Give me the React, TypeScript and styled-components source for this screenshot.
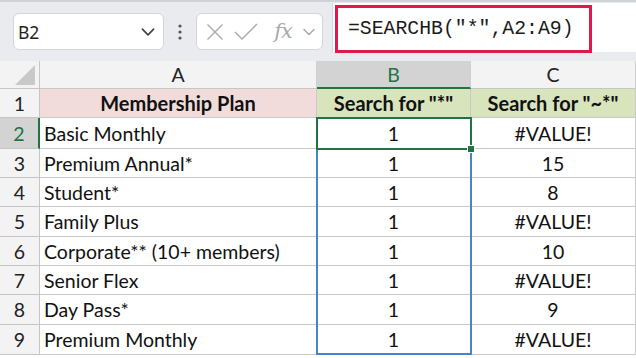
import React from "react";
import styled, { createGlobalStyle } from "styled-components";

const Global = createGlobalStyle`
  html, body { margin: 0; padding: 0; background: #ffffff; }
  body { width: 636px; height: 358px; overflow: hidden; }
  * { box-sizing: border-box; }
`;

const Page = styled.div`
  width: 636px;
  height: 358px;
  overflow: hidden;
  display: flex;
  flex-direction: column;
  font-family: Lato, "Open Sans", sans-serif;
`;

const Toolbar = styled.div`
  height: 61px;
  flex: 0 0 61px;
  background: #e9ebee;
  border-top: 2px solid #cfd2d6;
  display: flex;
  align-items: flex-start;
  padding-left: 13px;
`;

const NameBox = styled.div`
  margin-top: 11px;
  width: 151px;
  height: 37px;
  background: #fff;
  border: 1px solid #d3d5d9;
  border-radius: 6px;
  display: flex;
  align-items: center;
  justify-content: space-between;
  padding: 0 6px 0 4px;
  font-family: "Noto Sans", "Open Sans", sans-serif;
  font-size: 17.5px;
  color: #1f1f1f;
`;

const Dots = styled.div`
  width: 32px;
  height: 37px;
  margin-top: 11px;
  display: flex;
  align-items: center;
  justify-content: center;
`;

const FxButtons = styled.div`
  margin-top: 11px;
  width: 127px;
  height: 37px;
  background: #fff;
  border: 1px solid #d3d5d9;
  border-radius: 6px;
  display: flex;
  align-items: center;
  padding-left: 6px;
`;

const IconSlot = styled.div<{ $w: number }>`
  width: ${(p) => p.$w}px;
  height: 100%;
  display: flex;
  align-items: center;
  justify-content: center;
`;

const Fx = styled.span`
  font-family: "DejaVu Serif", "Liberation Serif", serif;
  font-style: italic;
  font-size: 21px;
  color: #a9a9a9;
  letter-spacing: -1px;
  margin-top: -2px;
`;

const FormulaBar = styled.div`
  margin-left: 9px;
  margin-top: 1px;
  flex: 1;
  height: 49px;
  background: #fff;
  border-left: 1px solid #d6d8db;
  display: flex;
  align-items: flex-start;
  padding-left: 2px;
`;

const Highlight = styled.div`
  margin-top: 2px;
  width: 257px;
  height: 48px;
  border: 3px solid #e0194a;
  display: flex;
  align-items: center;
  padding-left: 10px;
  font-family: "Liberation Mono", "DejaVu Sans Mono", monospace;
  font-size: 19.8px;
  color: #1a1a1a;
  white-space: nowrap;
`;

const Sheet = styled.div`
  position: relative;
  display: grid;
  grid-template-columns: 40px 277px 154px 165px;
  grid-template-rows: 28px 29px 31px 29px 29px 30px 29px 29px 30px 30px;
`;

const ColHead = styled.div<{ $sel?: boolean }>`
  background: ${(p) => (p.$sel ? "#d3d3d3" : "#f3f3f3")};
  border-right: 1px solid #d0d0d0;
  border-bottom: ${(p) => (p.$sel ? "2px solid #217346" : "1px solid #c6c6c6")};
  display: flex;
  align-items: center;
  justify-content: center;
  font-size: 19.5px;
  color: ${(p) => (p.$sel ? "#217346" : "#222")};
  padding-top: ${(p) => (p.$sel ? "1px" : "0")};
`;

const Corner = styled.div`
  background: #f3f3f3;
  border-right: 1px solid #c6c6c6;
  border-bottom: 1px solid #c6c6c6;
  display: flex;
  align-items: flex-end;
  justify-content: flex-end;
  padding: 0 4px 3px 0;
`;

const RowHead = styled.div<{ $sel?: boolean }>`
  background: ${(p) => (p.$sel ? "#d3d3d3" : "#f3f3f3")};
  border-right: ${(p) => (p.$sel ? "2px solid #217346" : "1px solid #c6c6c6")};
  border-bottom: 1px solid #c6c6c6;
  display: flex;
  align-items: center;
  justify-content: center;
  font-size: 19.5px;
  color: ${(p) => (p.$sel ? "#217346" : "#222")};
`;

const Cell = styled.div<{ $align?: "left" | "center"; $bg?: string; $bold?: boolean }>`
  background: ${(p) => p.$bg || "#fff"};
  border-right: 1px solid #c9c9c9;
  border-bottom: 1px solid #c9c9c9;
  display: flex;
  align-items: center;
  justify-content: ${(p) => (p.$align === "center" ? "center" : "flex-start")};
  padding-left: ${(p) => (p.$align === "center" ? "0" : "4px")};
  font-size: ${(p) => (p.$bold ? "20px" : "19.5px")};
  font-weight: ${(p) => (p.$bold ? 700 : 400)};
  color: #111;
  white-space: nowrap;
  overflow: hidden;
`;

const RangeBox = styled.div`
  position: absolute;
  left: 316px;
  top: 56px;
  width: 156px;
  height: 238px;
  border: 2px solid #4a82cf;
  pointer-events: none;
`;

const ActiveBox = styled.div`
  position: absolute;
  left: 316px;
  top: 56px;
  width: 156px;
  height: 33px;
  border: 2px solid #217346;
  pointer-events: none;
`;

const FillHandle = styled.div`
  position: absolute;
  right: -5px;
  bottom: -5px;
  width: 8px;
  height: 8px;
  background: #217346;
  border: 1px solid #fff;
`;

const Chevron = ({ color, size }: { color: string; size: number }) => (
  <svg width={size} height={size} viewBox="0 0 16 16" fill="none">
    <path d="M3 5.5 L8 10.5 L13 5.5" stroke={color} strokeWidth="1.5" strokeLinecap="round" strokeLinejoin="round" />
  </svg>
);

const data: [string, string, string][] = [
  ["Basic Monthly", "1", "#VALUE!"],
  ["Premium Annual*", "1", "15"],
  ["Student*", "1", "8"],
  ["Family Plus", "1", "#VALUE!"],
  ["Corporate** (10+ members)", "1", "10"],
  ["Senior Flex", "1", "#VALUE!"],
  ["Day Pass*", "1", "9"],
  ["Premium Monthly", "1", "#VALUE!"],
];

export default function App() {
  return (
    <Page>
      <Global />
      <Toolbar>
        <NameBox>
          <span>B2</span>
          <Chevron color="#444" size={18} />
        </NameBox>
        <Dots>
          <svg width="4" height="16" viewBox="0 0 4 16">
            <circle cx="2" cy="2" r="1.6" fill="#555" />
            <circle cx="2" cy="8" r="1.6" fill="#555" />
            <circle cx="2" cy="14" r="1.6" fill="#555" />
          </svg>
        </Dots>
        <FxButtons>
          <IconSlot $w={24}>
            <svg width="18" height="18" viewBox="0 0 18 18">
              <path d="M1.5 1.5 L16.5 16.5 M16.5 1.5 L1.5 16.5" stroke="#a9a9a9" strokeWidth="1.4" />
            </svg>
          </IconSlot>
          <IconSlot $w={38}>
            <svg width="24" height="17" viewBox="0 0 24 17">
              <path d="M1 9 L8 16 L23 1" stroke="#a9a9a9" strokeWidth="1.4" fill="none" />
            </svg>
          </IconSlot>
          <IconSlot $w={36}>
            <Fx>fx</Fx>
          </IconSlot>
          <IconSlot $w={16}>
            <Chevron color="#a9a9a9" size={16} />
          </IconSlot>
        </FxButtons>
        <FormulaBar>
          <Highlight>=SEARCHB("*",A2:A9)</Highlight>
        </FormulaBar>
      </Toolbar>
      <Sheet>
        <Corner>
          <svg width="20" height="20" viewBox="0 0 20 20">
            <polygon points="0,20 20,0 20,20" fill="#c9c9c9" />
          </svg>
        </Corner>
        <ColHead>A</ColHead>
        <ColHead $sel>B</ColHead>
        <ColHead>C</ColHead>

        <RowHead>1</RowHead>
        <Cell $align="center" $bg="#f2dcdb" $bold>Membership Plan</Cell>
        <Cell $align="center" $bg="#d8e4bc" $bold>Search for "*"</Cell>
        <Cell $align="center" $bg="#d8e4bc" $bold>Search for "~*"</Cell>

        {data.map((r, i) => (
          <React.Fragment key={i}>
            <RowHead $sel={i === 0}>{i + 2}</RowHead>
            <Cell>{r[0]}</Cell>
            <Cell $align="center">{r[1]}</Cell>
            <Cell $align="center">{r[2]}</Cell>
          </React.Fragment>
        ))}
        <RangeBox />
        <ActiveBox>
          <FillHandle />
        </ActiveBox>
      </Sheet>
    </Page>
  );
}
